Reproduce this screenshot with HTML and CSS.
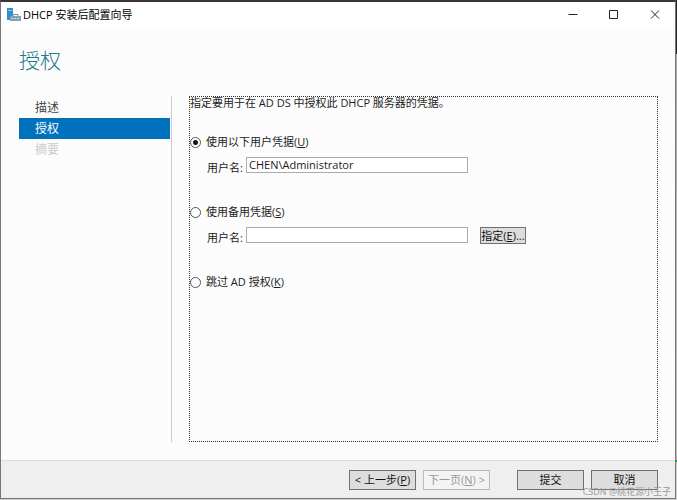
FILE: index.html
```html
<!DOCTYPE html>
<html lang="zh-CN">
<head>
    <meta charset="utf-8">
    <title>DHCP 安装后配置向导</title>
    <link rel="stylesheet" href="styles.css">
</head>
<body>
    <div class="window">
        <header class="titlebar">
            <svg class="app-icon" width="14" height="14" viewBox="0 0 14 14">
                <rect x="0" y="0" width="6" height="12" fill="#2f8fd0"/>
                <rect x="1" y="2" width="4" height="1" fill="#8cc8ee"/>
                <rect x="3" y="8" width="11" height="5" fill="#7fa3bb"/>
                <path d="M6 8V6.500H11V8" fill="none" stroke="#7d8f9c"/>
                <path d="M4 10.500H13" stroke="#c5d8e4" stroke-dasharray="2 1"/>
            </svg>
            <span class="title">DHCP 安装后配置向导</span>
            <button type="button" class="caption" aria-label="最小化">
                <svg width="10" height="10" viewBox="0 0 10 10"><path d="M0.500 4.500H9.500"/></svg>
            </button>
            <button type="button" class="caption" aria-label="最大化">
                <svg width="10" height="10" viewBox="0 0 10 10"><path d="M0.500 0.500H8.500V8.500H0.500Z"/></svg>
            </button>
            <button type="button" class="caption" aria-label="关闭">
                <svg width="10" height="10" viewBox="0 0 10 10"><path d="M1 0.500L9 8.500M9 0.500L1 8.500"/></svg>
            </button>
        </header>
        <h1>授权</h1>
        <main>
            <nav>
                <a href="#desc">描述</a>
                <a href="#auth" class="active">授权</a>
                <a href="#summary" class="disabled">摘要</a>
            </nav>
            <form class="panel" id="auth">
                <p>指定要用于在 AD DS 中授权此 DHCP 服务器的凭据。</p>
                <div class="option">
                    <input type="radio" name="cred" id="cred-user" checked>
                    <label for="cred-user">使用以下用户凭据(<u>U</u>)</label>
                </div>
                <div class="field">
                    <label for="user">用户名:</label>
                    <input type="text" id="user" value="CHEN\Administrator">
                </div>
                <div class="option">
                    <input type="radio" name="cred" id="cred-other">
                    <label for="cred-other">使用备用凭据(<u>S</u>)</label>
                </div>
                <div class="field">
                    <label for="other">用户名:</label>
                    <input type="text" id="other">
                    <button type="button" class="btn specify">指定(<u>E</u>)...</button>
                </div>
                <div class="option">
                    <input type="radio" name="cred" id="cred-skip">
                    <label for="cred-skip">跳过 AD 授权(<u>K</u>)</label>
                </div>
            </form>
        </main>
        <footer>
            <button type="button" class="btn">&lt; 上一步(<u>P</u>)</button>
            <button type="button" class="btn" disabled>下一页(<u>N</u>) &gt;</button>
            <button type="button" class="btn submit">提交</button>
            <button type="button" class="btn">取消</button>
        </footer>
    </div>
    <div class="watermark">CSDN @桃花源小王子</div>
</body>
</html>
```
FILE: styles.css
```css
*{
    box-sizing: border-box;
}
body{
    margin: 0;
    min-height: 100vh;
    padding: 0 1px 1px 0;
    display: flex;
    position: relative;
    font-family: "Open Sans", "Noto Sans CJK SC", sans-serif;
    font-size: 11px;
    line-height: 16px;
    color: #1c1c1c;
    background: linear-gradient(#222 54px, #aaa 54px, #bbb 460px, #2a9a2a 460px, #2a9a2a 462px, #ccc 462px);
}
.window{
    flex: 1;
    display: flex;
    flex-direction: column;
    background-color: #fcfcfc;
    border: 1px solid #777;
    border-top: 2px solid #3a3638;
}
.titlebar{
    display: flex;
    align-items: center;
    height: 25px;
    padding-left: 6px;
    background-color: white;
}
.app-icon{
    margin-right: 2px;
}
.title{
    flex: 1;
    color: black;
}
.caption{
    width: 41px;
    height: 25px;
    padding: 0;
    border: none;
    background: none;
}
.caption svg{
    display: block;
    margin: auto;
    fill: none;
    stroke: #222;
}
h1{
    margin: 18px 18px 21px;
    font-size: 21px;
    line-height: 30px;
    font-weight: 300;
    color: #1f7a8c;
}
main{
    flex: 1;
    display: flex;
    padding: 0 17px 0 18px;
    margin-bottom: 18px;
}
nav{
    width: 153px;
    padding: 1px 1px 0 0;
    margin-right: 17px;
    border-right: 1px solid #ccc;
}
nav a{
    display: block;
    padding-left: 16px;
    font-size: 12px;
    line-height: 21px;
    color: #444;
    text-decoration: none;
}
nav a.active{
    color: white;
    background-color: #0072bc;
}
nav a.disabled{
    color: #ccc;
}
.panel{
    flex: 1;
    border: 1px dotted #333;
}
.panel p{
    margin: -2px 0 23px;
}
.option{
    display: flex;
    align-items: center;
    height: 16px;
}
.option input{
    appearance: none;
    width: 11px;
    height: 11px;
    margin: 0 5px 0 0;
    border: 1px solid #555;
    border-radius: 50%;
    background-color: white;
}
.option input:checked{
    background-image: radial-gradient(circle, #111 2px, transparent 3px);
}
.field{
    display: flex;
    align-items: flex-start;
    height: 16px;
    margin: 7px 0 31px 17px;
}
.field label{
    width: 39px;
    padding-top: 3px;
}
.field input{
    width: 222px;
    height: 16px;
    padding: 0 2px;
    border: 1px solid #aaa;
    background-color: white;
    font: inherit;
    color: inherit;
}
.btn{
    width: 67px;
    height: 20px;
    padding: 0;
    border: 1px solid #707070;
    background-color: #ddd;
    font: inherit;
    color: #111;
    white-space: nowrap;
}
.btn:disabled{
    border-color: #bbb;
    background-color: #f3f3f3;
    color: #999;
}
.specify{
    width: 46px;
    height: 17px;
    margin-left: 12px;
    line-height: 15px;
}
footer{
    display: flex;
    justify-content: flex-end;
    gap: 7px;
    padding: 9px 17px 8px;
    border-top: 1px solid #ddd;
    background-color: #efefef;
}
.submit{
    margin-left: 20px;
}
.watermark{
    position: absolute;
    right: 6px;
    bottom: 1px;
    font-size: 9px;
    line-height: 14px;
    color: #999;
}
```
